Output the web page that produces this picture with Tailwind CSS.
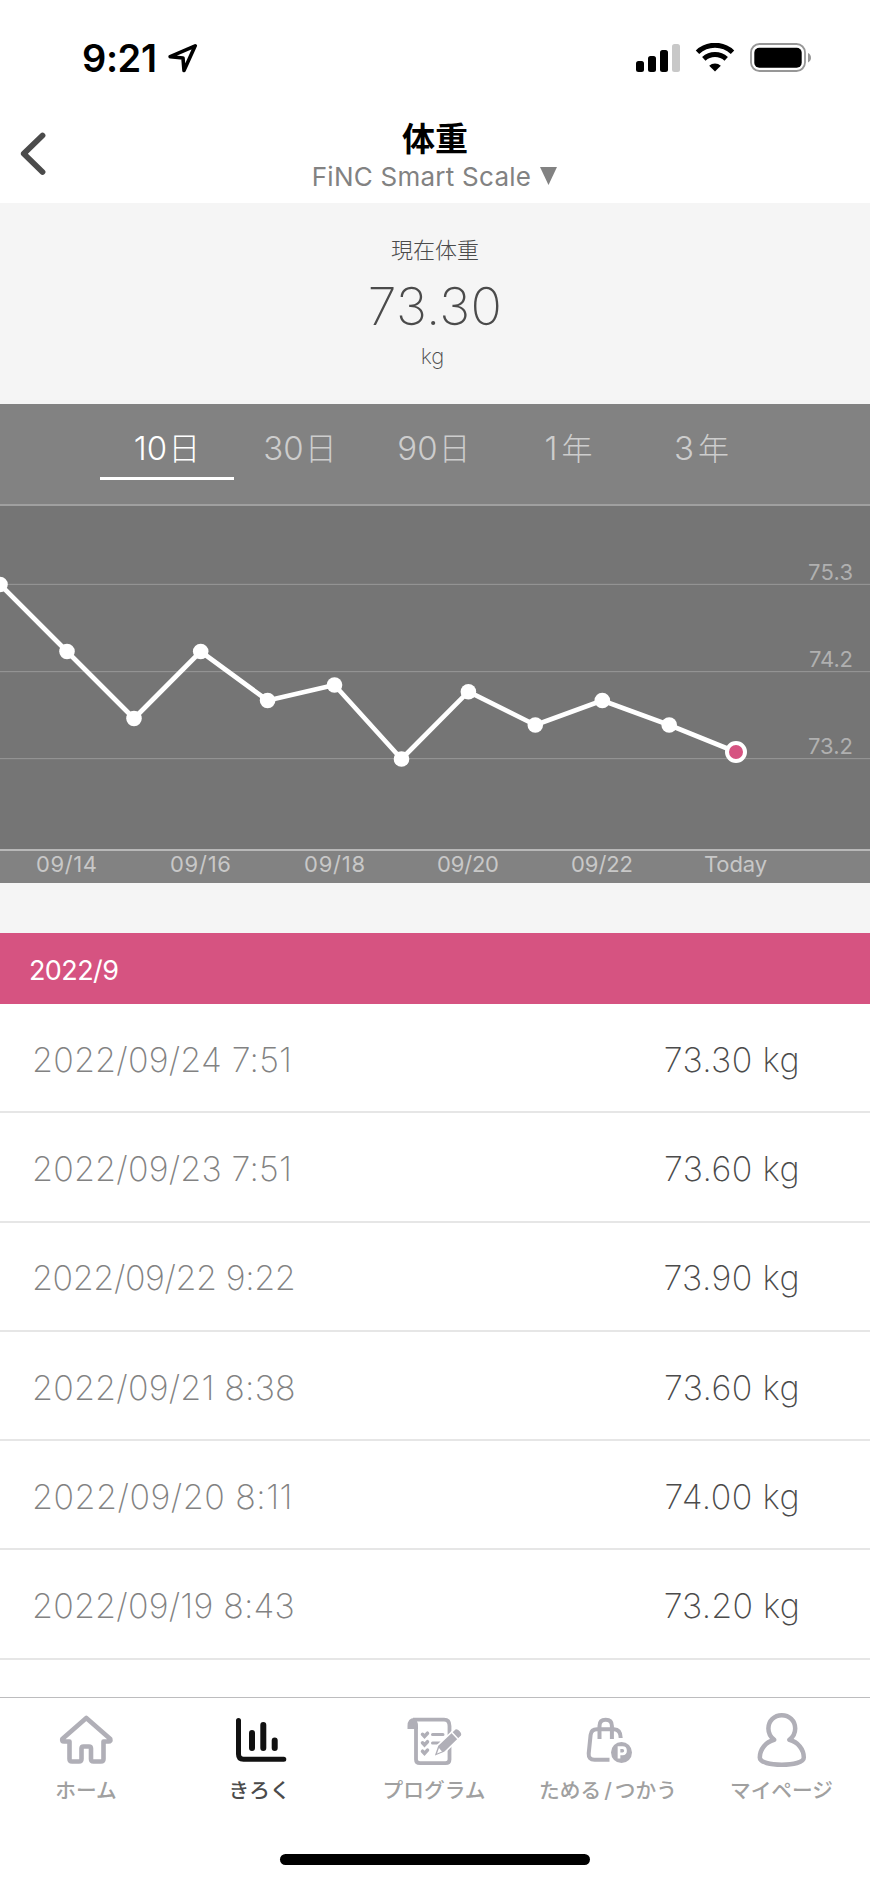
<!DOCTYPE html>
<html lang="ja">
<head>
  <meta charset="UTF-8">
  <meta name="viewport" content="width=device-width, initial-scale=1.0">
  <title>体重</title>
  <script src="https://cdn.jsdelivr.net/npm/@tailwindcss/browser@4"></script>
</head>
<body class="bg-white">
  <div class="w-[870px] h-[1883px] flex flex-col overflow-hidden bg-white font-['Inter','Noto_Sans_CJK_JP',sans-serif]">

    <!-- Status bar -->
    <div class="h-[100px] shrink-0 flex items-start justify-between pl-[82px] pr-[58px] pt-[43px]">
      <div class="flex items-start">
        <span class="w-[86px] text-[38px] leading-[31px] font-semibold tracking-[-0.4px] text-black">9:21</span>
        <svg class="w-[30px] h-[30px]" viewBox="0 0 30 30" fill="none" stroke="#000" stroke-width="3.6" stroke-linejoin="round">
          <path d="M27.2 2.8 L2.2 13.7 L15 15 L16 27.5 Z"/>
        </svg>
      </div>
      <div class="flex items-start">
        <svg class="w-[176px] h-[30px]" viewBox="0 0 176 30">
          <rect x="0" y="18" width="8" height="11" rx="2.5"/>
          <rect x="12" y="13" width="8" height="16" rx="2.5"/>
          <rect x="24" y="7" width="8" height="22" rx="2.5"/>
          <rect x="36" y="1" width="8" height="28" rx="2.5" fill="#c8c8c8"/>
          <path d="M61.5 9.2 A25.5 25.5 0 0 1 96.5 9.2" fill="none" stroke="#000" stroke-width="5"/>
          <path d="M67.8 15.8 A16.5 16.5 0 0 1 90.2 15.8" fill="none" stroke="#000" stroke-width="5"/>
          <path d="M79 28.5 L73.2 22.7 A8.4 8.4 0 0 1 84.8 22.7 Z"/>
          <rect x="115" y="1" width="54" height="27" rx="8.5" fill="none" stroke="#979797" stroke-width="1.8"/>
          <rect x="118.3" y="4.7" width="47.4" height="20" rx="5"/>
          <path d="M172 10 Q175 11.5 175 14.7 Q175 17.9 172 19.4 Z" fill="#979797"/>
        </svg>
      </div>
    </div>

    <!-- Header -->
    <header class="h-[103px] shrink-0 grid grid-cols-[120px_1fr_120px]">
      <button class="flex items-start pl-[20px] pt-[31px]" aria-label="戻る">
        <svg class="w-[27px] h-[46px]" viewBox="0 0 27 46" fill="none" stroke="#4b4b4b" stroke-width="5.8" stroke-linecap="round" stroke-linejoin="round">
          <path d="M22.5 4.5 L3.8 22.7 L22.5 41"/>
        </svg>
      </button>
      <div class="flex flex-col items-center pt-[21px]">
        <h1 class="text-[33px] leading-[37px] font-bold text-black">体重</h1>
        <div class="flex items-center gap-[9px] h-[36px] pr-[1px]">
          <span class="text-[26px] tracking-[0.25px] text-[#828282]">FiNC Smart Scale</span>
          <svg class="w-[17px] h-[18px]" viewBox="0 0 17 18"><path d="M0 0 H17 L8.5 18 Z" fill="#828282"/></svg>
        </div>
      </div>
    </header>

    <!-- Current weight -->
    <section class="h-[201px] shrink-0 flex flex-col items-center bg-[#f5f5f5] text-[#4b4b4b] pt-[32px]">
      <p class="text-[22px] leading-[30px] font-light">現在体重</p>
      <p class="mt-[11px] text-[52px] leading-[62px] font-extralight tracking-[0.3px]">73.30</p>
      <p class="mt-[3px] pr-[5px] text-[22px] leading-[30px] font-extralight">kg</p>
    </section>

    <!-- Period tabs -->
    <nav class="h-[102px] shrink-0 grid grid-cols-[repeat(5,134px)] justify-center bg-[#828282] border-b-2 border-[#a0a0a0] text-[#cdcdcd] text-[33px] leading-[44px] font-light text-center">
      <div class="h-[76px] pt-[22px] border-b-[3px] border-white text-white">10<span class="ml-[1px] text-[32px]">日</span></div>
      <div class="pt-[22px] pr-[2px]">30<span class="ml-[1px] text-[32px]">日</span></div>
      <div class="pt-[22px] pr-[2px]">90<span class="ml-[1px] text-[32px]">日</span></div>
      <div class="pt-[22px] pr-[1px]">1<span class="ml-[4px] text-[31px]">年</span></div>
      <div class="pt-[22px] pr-[3px]">3<span class="ml-[4px] text-[31px]">年</span></div>
    </nav>

    <!-- Chart -->
    <svg class="w-[870px] h-[377px] shrink-0" viewBox="0 0 870 377" font-size="22">
      <rect width="870" height="343" fill="#757575"/>
      <rect y="343" width="870" height="34" fill="#828282"/>
      <g fill="#939393">
        <rect y="77.8" width="870" height="1.2"/>
        <rect y="165" width="870" height="1.2"/>
        <rect y="252" width="870" height="1.2"/>
      </g>
      <rect y="343" width="870" height="2" fill="#b8b8b8"/>
      <polyline fill="none" stroke="#fff" stroke-width="4.7" stroke-linejoin="round" points="0,78.5 67,145.5 134,212.5 200.7,145.5 267.6,194.5 334.5,179 401.5,253 468.4,185.7 535.3,219 602.3,194.5 669.2,219 736,246"/>
      <g fill="#fff">
        <circle cx="0" cy="78.5" r="7.8"/>
        <circle cx="67" cy="145.5" r="7.8"/>
        <circle cx="134" cy="212.5" r="7.8"/>
        <circle cx="200.7" cy="145.5" r="7.8"/>
        <circle cx="267.6" cy="194.5" r="7.8"/>
        <circle cx="334.5" cy="179" r="7.8"/>
        <circle cx="401.5" cy="253" r="7.8"/>
        <circle cx="468.4" cy="185.7" r="7.8"/>
        <circle cx="535.3" cy="219" r="7.8"/>
        <circle cx="602.3" cy="194.5" r="7.8"/>
        <circle cx="669.2" cy="219" r="7.8"/>
      </g>
      <circle cx="736" cy="246" r="9" fill="#d65381" stroke="#fff" stroke-width="4"/>
      <g fill="#b0b0b0">
        <text x="808" y="73.5" textLength="45">75.3</text>
        <text x="809" y="160.5" textLength="44">74.2</text>
        <text x="808" y="247.5" textLength="45">73.2</text>
      </g>
      <g fill="#c8c8c8">
        <text x="36" y="366" textLength="61">09/14</text>
        <text x="170" y="366" textLength="61">09/16</text>
        <text x="304" y="366" textLength="61">09/18</text>
        <text x="437" y="366" textLength="62">09/20</text>
        <text x="571" y="366" textLength="62">09/22</text>
        <text x="704" y="366" textLength="63">Today</text>
      </g>
    </svg>

    <div class="h-[50px] shrink-0 bg-[#f5f5f5]"></div>

    <!-- Records -->
    <h2 class="h-[71px] shrink-0 flex items-center pl-[29px] pt-[6px] bg-[#d65381] text-white text-[27px] tracking-[-0.6px]">2022/9</h2>
    <ul class="h-[693px] shrink-0 overflow-hidden text-[34px] font-extralight">
      <li class="h-[109.3px] flex items-center justify-between pt-[3px] pl-[32px] pr-[70px] border-b-2 border-[#e6e6e6]">
        <span class="text-[#828282] tracking-[0.2px]">2022/09/24 7:51</span><span class="text-[#4b4b4b] tracking-[0.4px]">73.30 kg</span>
      </li>
      <li class="h-[109.3px] flex items-center justify-between pt-[3px] pl-[32px] pr-[70px] border-b-2 border-[#e6e6e6]">
        <span class="text-[#828282] tracking-[0.2px]">2022/09/23 7:51</span><span class="text-[#4b4b4b] tracking-[0.4px]">73.60 kg</span>
      </li>
      <li class="h-[109.3px] flex items-center justify-between pt-[3px] pl-[32px] pr-[70px] border-b-2 border-[#e6e6e6]">
        <span class="text-[#828282] tracking-[-0.4px]">2022/09/22 9:22</span><span class="text-[#4b4b4b] tracking-[0.4px]">73.90 kg</span>
      </li>
      <li class="h-[109.3px] flex items-center justify-between pt-[3px] pl-[32px] pr-[70px] border-b-2 border-[#e6e6e6]">
        <span class="text-[#828282] tracking-[0.2px]">2022/09/21 8:38</span><span class="text-[#4b4b4b] tracking-[0.4px]">73.60 kg</span>
      </li>
      <li class="h-[109.3px] flex items-center justify-between pt-[3px] pl-[32px] pr-[70px] border-b-2 border-[#e6e6e6]">
        <span class="text-[#828282] tracking-[0.5px]">2022/09/20 8:11</span><span class="text-[#4b4b4b] tracking-[0.4px]">74.00 kg</span>
      </li>
      <li class="h-[109.3px] flex items-center justify-between pt-[3px] pl-[32px] pr-[70px] border-b-2 border-[#e6e6e6]">
        <span class="text-[#828282] tracking-[0.2px]">2022/09/19 8:43</span><span class="text-[#4b4b4b] tracking-[0.2px]">73.20 kg</span>
      </li>
    </ul>

    <!-- Tab bar -->
    <footer class="h-[186px] shrink-0 flex flex-col items-center border-t border-[#bcbcbe]">
      <div class="h-[156px] w-full grid grid-cols-[172px_175px_174px_174px_173px] text-center text-[20.7px] leading-[30px] font-medium text-[#a0a0a0]">
        <div class="flex flex-col items-center pt-[12px]">
          <svg class="w-[60px] h-[60px] mb-[6px]" viewBox="56 1710 60 60" fill="none" stroke="#b0afb7" stroke-width="4.6" stroke-linejoin="round">
            <path d="M86.3 1718 L62.3 1739 Q61.5 1741.5 64 1741.5 H69.5 V1759 Q69.5 1761.5 72 1761.5 H79 Q81.5 1761.5 81.5 1759 V1748.5 Q81.5 1746.5 83.5 1746.5 H89 Q91 1746.5 91 1748.5 V1759 Q91 1761.5 93.5 1761.5 H101 Q103.5 1761.5 103.5 1759 V1741.5 H108.5 Q111 1741.5 110.3 1739 Z"/>
          </svg>
          ホーム
        </div>
        <div class="flex flex-col items-center pt-[12px] text-[#4b4b4b]">
          <svg class="w-[60px] h-[60px] mb-[6px]" viewBox="230 1710 60 60" fill="none" stroke="#111" stroke-linecap="round">
            <path d="M238.5 1720.5 V1754 Q238.5 1759.3 243.5 1759.3 H283.8" stroke-width="5"/>
            <path d="M252 1733 V1748 M263.3 1725 V1748 M274.7 1740.5 V1748" stroke-width="6"/>
          </svg>
          きろく
        </div>
        <div class="flex flex-col items-center pt-[12px]">
          <svg class="w-[60px] h-[60px] mb-[6px]" viewBox="404 1710 60 60" fill="none" stroke="#b0afb7">
            <path d="M407.5 1729 V1726 Q407.5 1718 414.5 1718 Q417.5 1718 418 1729 Z" fill="#b0afb7" stroke="none"/>
            <path d="M413 1719.7 H444 Q449.5 1719.7 449.5 1726 V1759.5 Q449.5 1763.2 445.5 1763.2 H420 Q416 1763.2 416 1759.5 V1726 Q416 1722 413 1719.7" stroke-width="3.8"/>
            <path d="M432.5 1734.5 H443 M432.5 1743 H440" stroke-width="3" stroke-linecap="round"/>
            <path d="M422.5 1734.3 L424.5 1736.5 L427.5 1733.2 M422.5 1742.8 L424.5 1745 L427.5 1741.7 M422.5 1751.2 L424.5 1753.4 L427.5 1750.1" stroke-width="3.5" stroke-linecap="round"/>
            <path d="M433.5 1757 L437.5 1745.5 L455.5 1728.5 Q458 1728 460.5 1731 Q463 1734 461.5 1736 L444.5 1752.5 Z" fill="#b0afb7" stroke="#fff" stroke-width="1.6"/>
            <path d="M451 1731.5 L458.5 1739.5" stroke="#fff" stroke-width="1.5"/>
            <path d="M437 1753.5 L439 1748 L442 1751.5 Z" fill="#fff" stroke="none"/>
          </svg>
          プログラム
        </div>
        <div class="flex flex-col items-center pt-[12px]">
          <svg class="w-[60px] h-[60px] mb-[6px]" viewBox="578 1710 60 60" fill="none" stroke="#b0afb7" stroke-width="4">
            <path d="M609.5 1759.7 H594.5 Q588.3 1759.7 588.7 1753.5 L590.6 1735 Q591.3 1729.3 597 1729.3 H614 Q620.5 1729.3 620.7 1738"/>
            <path d="M599.5 1739 V1726 Q599.5 1719.8 605.7 1719.8 Q611.9 1719.8 611.9 1726 V1739"/>
            <circle cx="621.5" cy="1752.5" r="10.5" fill="#b0afb7" stroke="none"/>
            <path d="M619 1758.5 V1747.7 H622.5 Q625.5 1747.7 625.5 1750.8 Q625.5 1753.9 622.5 1753.9 H619" stroke="#fff" stroke-width="2.7"/>
          </svg>
          <span>ためる<span class="mx-[3px]">/</span>つかう</span>
        </div>
        <div class="flex flex-col items-center pt-[12px]">
          <svg class="w-[60px] h-[60px] mb-[6px]" viewBox="752 1710 60 60" fill="none" stroke="#b0afb7" stroke-width="4.5" stroke-linejoin="round">
            <path d="M774.2 1739.8 C770.5 1737 768.4 1733 768.4 1728.5 C768.4 1720.5 774.5 1715.2 781.8 1715.2 C789.1 1715.2 795.2 1720.5 795.2 1728.5 C795.2 1733 793.1 1737 789.4 1739.8 C798 1742 803.8 1749.5 803.8 1757.5 C803.8 1762.5 793 1764.7 781.8 1764.7 C770.6 1764.7 759.8 1762.5 759.8 1757.5 C759.8 1749.5 765.6 1742 774.2 1739.8 Z"/>
          </svg>
          マイページ
        </div>
      </div>
      <div class="w-[310px] h-[11px] rounded-full bg-black"></div>
    </footer>
  </div>
</body>
</html>
